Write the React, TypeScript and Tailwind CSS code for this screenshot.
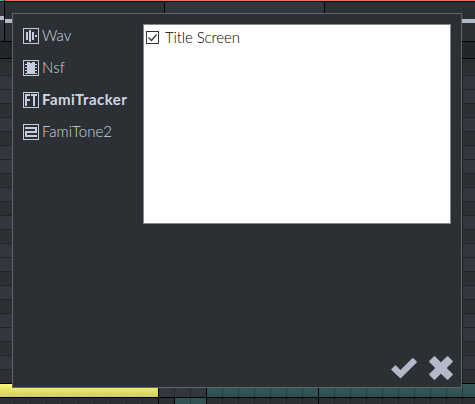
const light = 'bg-[#32363f]';
const dark = 'bg-[#2b3034]';
const rows = [
  dark, light, light, dark, light, dark, light, light, dark, light, dark, light,
  dark, light, light, dark, light, dark, light, light, dark, light,
];

function Icon({ kind }: { kind: string }) {
  return (
    <svg width="16" height="16" viewBox="0 0 16 16" shapeRendering="crispEdges" fill="#c6ccdd" className="shrink-0">
      <path d="M0 0h16v16H0zM1 1v14h14V1z" fillRule="evenodd" />
      {kind === 'wav' && <path d="M3 4h2v8H3zM6 2h2v12H6zM9 4h2v8H9zM12 7h2v2h-2z" />}
      {kind === 'nsf' && (
        <path d="M4 2h3v1h2V2h3v12H4zM2 4h2v1H2zM2 7h2v1H2zM2 10h2v1H2zM2 13h2v1H2zM12 4h2v1h-2zM12 7h2v1h-2zM12 10h2v1h-2zM12 13h2v1h-2z" />
      )}
      {kind === 'ft' && <path d="M2 2h5v2H4v3h3v2H4v5H2zM8 2h6v2h-2v10h-2V4H8z" />}
      {kind === 'two' && <path d="M2 3h12v6H4v2h10v2H2V7h10V5H2z" />}
    </svg>
  );
}

const tabs = [
  { kind: 'wav', label: 'Wav', cls: 'font-light tracking-[0.1px]' },
  { kind: 'nsf', label: 'Nsf', cls: 'font-light tracking-[0.1px]' },
  { kind: 'ft', label: 'FamiTracker', cls: 'font-bold tracking-[0.43px]' },
  { kind: 'two', label: 'FamiTone2', cls: 'font-light' },
];

function Ticks({ count }: { count: number }) {
  return (
    <>
      {Array.from({ length: count }, (_, i) => (
        <div key={i} className="w-4 shrink-0 border-r border-black/25" />
      ))}
    </>
  );
}

export default function App() {
  return (
    <div className="relative h-[404px] w-[475px] overflow-hidden bg-[#2b3034] font-['Lato',sans-serif]">
      <div className="flex h-[42px] border-b border-black">
        <div className="w-[5px] border-r border-black bg-[#32363f]">
          <div className="h-px bg-[#4bb9ad]" />
          <div className="h-px bg-black" />
          <div className="mt-[14px] h-[4px] bg-[#b4b9c9]" />
        </div>
        <div className="flex-1">
          <div className="h-px bg-[#f07263]" />
          <div className="h-px bg-black" />
          <div className="flex h-[17px]">
            <div className="w-[160px] border-r border-black" />
            <div className="w-[160px] border-r border-black bg-[#32363f]" />
          </div>
          <div className="h-[4px] bg-[#b4b9c9]" />
        </div>
      </div>
      <div className="h-[17px] border-b border-black bg-[#222529]" />
      <div className="flex h-[3px] border-b border-[#212428]">
        <div className="w-[463px] border-r border-[#212428]" />
      </div>
      {rows.map((c, i) => (
        <div key={i} className={`flex h-[14px] border-b border-[#212428] ${c}`}>
          <div className="w-[463px] border-r border-[#212428]" />
        </div>
      ))}
      <div className="flex h-[14px] border-b border-black bg-[#2b3034]">
        <div className="w-[463px] border-r border-[#212428]" />
      </div>
      <div className="flex h-[14px] border-b border-black">
        <div className="w-[159px] shrink-0 border-r border-black bg-gradient-to-b from-[#f8f774] to-[#cfcd60]" />
        <div className="flex w-[48px] shrink-0 border-r border-black bg-[#32363f]">
          <Ticks count={2} />
        </div>
        <div className="flex w-[112px] shrink-0 border-r border-black bg-gradient-to-b from-[#345859] to-[#305051]">
          <Ticks count={6} />
        </div>
        <div className="flex min-w-0 flex-1 bg-gradient-to-b from-[#345859] to-[#305051]">
          <Ticks count={9} />
        </div>
      </div>
      <div className="flex h-[6px]">
        <div className="flex w-[159px] shrink-0 border-r border-black">
          <div className="w-[15px] shrink-0 border-r border-black/25" />
          <Ticks count={8} />
        </div>
        <div className="w-4 shrink-0 border-r border-black" />
        <div className="flex w-8 shrink-0 border-r border-black bg-[#315354]">
          <Ticks count={1} />
        </div>
        <div className="flex w-[112px] shrink-0 border-r border-black">
          <Ticks count={6} />
        </div>
        <Ticks count={9} />
      </div>
      <div className="absolute left-[12px] top-[13px] flex h-[375px] w-[450px] flex-col border border-[#626567] bg-[#2b3034]">
        <div className="flex pl-[10px] pt-[10px]">
          <div className="flex w-[120px] flex-col">
            {tabs.map((t) => (
              <div key={t.kind} className="flex h-8 items-start gap-[3px] pt-[4px] text-[15px] leading-[14px] text-[#d0d6e6]">
                <Icon kind={t.kind} />
                <span className={t.cls}>{t.label}</span>
              </div>
            ))}
          </div>
          <div className="h-[200px] w-[308px] border border-[#828790] bg-white pl-[2px] pt-[6px]">
            <div className="flex items-start gap-[6px] text-[15px] leading-[12px] text-black">
              <svg width="13" height="13" viewBox="0 0 13 13">
                <rect x=".5" y=".5" width="12" height="12" fill="white" stroke="#333" />
                <path d="M2.5 6.500l3 3 5-6" fill="none" stroke="#333" strokeWidth="1.200" />
              </svg>
              <span className="font-light tracking-[-0.1px]">Title Screen</span>
            </div>
          </div>
        </div>
        <div className="mt-auto flex justify-end gap-[12px] pb-[7px] pr-[8px]">
          <svg width="26" height="24" viewBox="0 0 26 24" fill="#b4b9c9" stroke="#b4b9c9" strokeWidth="1.5" strokeLinejoin="round">
            <path d="M1 13.500L4.500 10L9.500 15L21.800 2.800L25.200 6L9.500 21.500z" />
          </svg>
          <svg width="24" height="24" viewBox="0 0 24 24" fill="#b4b9c9" stroke="#b4b9c9" strokeWidth="2" strokeLinejoin="round">
            <path d="M1.200 5.500L5.500 1.200L12 7.700L18.500 1.200L22.800 5.500L16.300 12L22.800 18.500L18.500 22.800L12 16.300L5.500 22.800L1.200 18.500L7.700 12z" />
          </svg>
        </div>
      </div>
    </div>
  );
}
